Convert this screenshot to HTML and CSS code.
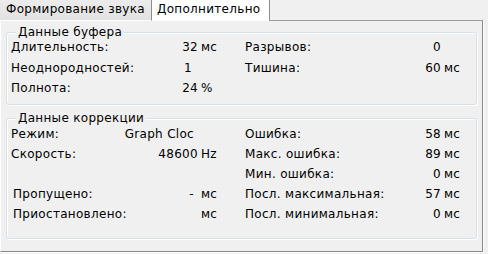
FILE: index.html
```html
<!DOCTYPE html>
<html lang="ru">
<head>
<meta charset="utf-8">
<title>Дополнительно</title>
<link rel="stylesheet" href="styles.css">
</head>
<body>
<div class="win">
  <div class="tabs">
    <div class="tab">Формирование звука</div>
    <div class="tab active">Дополнительно</div>
    <div class="tab-fill"></div>
  </div>
  <div class="panel">
    <fieldset class="group g1">
      <legend>Данные буфера</legend>
      <div class="grid g1rows">
        <span class="lbl">Длительность:</span><span class="val">32<span class="u">мс</span></span>
        <span class="lbl r">Разрывов:</span><span class="val">0<span class="u"></span></span>

        <span class="lbl">Неоднородностей:</span><span class="val one">1</span>
        <span class="lbl r">Тишина:</span><span class="val">60<span class="u">мс</span></span>

        <span class="lbl">Полнота:</span><span class="val">24<span class="u">%</span></span>
        <span></span><span></span>
      </div>
    </fieldset>
    <fieldset class="group g2">
      <legend>Данные коррекции</legend>
      <div class="grid g2rows">
        <span class="lbl">Режим:</span><span class="val mode">Graph Cloc</span>
        <span class="lbl r">Ошибка:</span><span class="val">58<span class="u">мс</span></span>

        <span class="lbl">Скорость:</span><span class="val">48600<span class="u">Hz</span></span>
        <span class="lbl r">Макс. ошибка:</span><span class="val">89<span class="u">мс</span></span>

        <span></span><span></span>
        <span class="lbl r">Мин. ошибка:</span><span class="val">0<span class="u">мс</span></span>

        <span class="lbl ind">Пропущено:</span><span class="val"><span class="dash">-</span><span class="u">мс</span></span>
        <span class="lbl r">Посл. максимальная:</span><span class="val">57<span class="u">мс</span></span>

        <span class="lbl ind">Приостановлено:</span><span class="val"><span class="u">мс</span></span>
        <span class="lbl r">Посл. минимальная:</span><span class="val">0<span class="u">мс</span></span>
      </div>
    </fieldset>
  </div>
</div>
</body>
</html>
```

FILE: styles.css
```css
html, body {
  margin: 0;
  padding: 0;
  background: #f0f0f0;
}

body {
  width: 488px;
  height: 254px;
  overflow: hidden;
  font-family: "DejaVu Sans", "Liberation Sans", sans-serif;
  font-size: 12px;
  letter-spacing: 0.3px;
  color: #000;
}

.win {
  width: 483px;
}

.tabs {
  display: flex;
  height: 21px;
}

.tab {
  box-sizing: border-box;
  height: 21px;
  line-height: 19px;
  white-space: nowrap;
}

.tab:first-child {
  width: 152px;
  padding-left: 6px;
  background: linear-gradient(#ececec, #e2e2e2);
  border-right: 1px solid #8d8d8d;
  border-bottom: 1px solid #ffffff;
}

.tab.active {
  width: 118px;
  padding-left: 5px;
  background: #ffffff;
  border-right: 1px solid #8d8d8d;
}

.tab-fill {
  flex: 1;
  border-bottom: 1px solid #9c9c9c;
}

.panel {
  box-sizing: border-box;
  height: 231px;
  border-left: 1px solid #ffffff;
  border-right: 1px solid #888888;
  border-bottom: 1px solid #888888;
  box-shadow: 1px 1px 0 #ffffff;
  padding: 5px 5px 0 5px;
}

.group {
  margin: 0;
  padding: 0 0 0 4px;
  min-inline-size: 0;
  border: 1px solid #d5dfe5;
  border-radius: 3px;
  box-shadow: inset 1px 1px 0 #ffffff, 1px 1px 0 #ffffff;
}

.group legend {
  margin-left: 5px;
  padding: 0 2px;
  line-height: 13px;
  background: #f0f0f0;
}

.g1 {
  padding-bottom: 6px;
}

.g2 {
  margin-top: 7px;
  padding-bottom: 14px;
}

.grid {
  display: grid;
  grid-template-columns: 120px 84px 180px 63px;
  line-height: 20px;
  white-space: nowrap;
}

.g1rows {
  margin-top: -2px;
  grid-template-rows: 21px 20px 20px;
}

.g2rows {
  margin-top: -1px;
  grid-auto-rows: 20px;
}

.lbl.r {
  padding-left: 30px;
}

.lbl.ind {
  padding-left: 2px;
}

.val {
  display: flex;
  justify-content: flex-end;
}

.u {
  display: inline-block;
  width: 14px;
  margin-left: 3px;
  text-align: left;
}

.val.one {
  padding-right: 23px;
}

.val.mode {
  padding-right: 21px;
}

.dash {
  margin-right: 4px;
}
```
